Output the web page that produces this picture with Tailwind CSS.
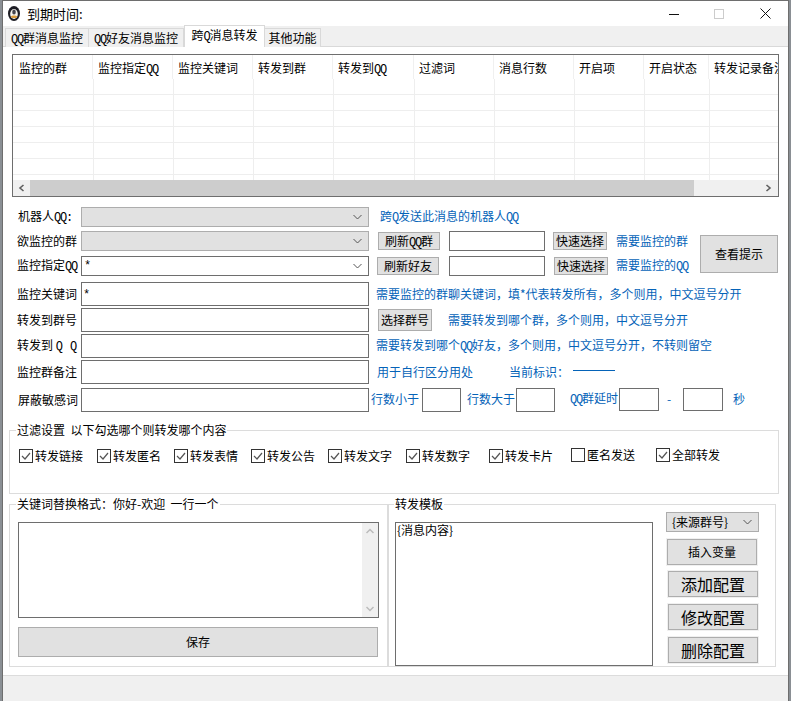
<!DOCTYPE html>
<html lang="zh-CN">
<head>
<meta charset="UTF-8">
<title>到期时间</title>
<script src="https://cdn.jsdelivr.net/npm/@tailwindcss/browser@4"></script>
</head>
<body class="w-[791px] h-[701px] overflow-hidden bg-[#8a8f94] font-['Noto_Sans_CJK_SC','Liberation_Sans',sans-serif] text-[12px] leading-[16px] text-black">
<div class="ml-[2px] w-[787px] h-[701px] bg-white border-t border-x border-[#6e6e6e] flex flex-col">

  <!-- title bar -->
  <div class="h-[25px] flex items-center shrink-0">
    <svg class="ml-[5px] w-[12px] h-[15px]" viewBox="0 0 12 15">
      <ellipse cx="6" cy="7.5" rx="6" ry="7.5" fill="#1d1d24"/>
      <ellipse cx="6" cy="8" rx="3.8" ry="5" fill="#f6f4ee"/>
      <ellipse cx="6" cy="6" rx="1.8" ry="2.6" fill="#44444c"/>
      <path d="M2.8 10.5c1-1.2 5.4-1.2 6.4 0l-1 1.5h-4.4z" fill="#d99a3a"/>
    </svg>
    <span class="ml-[7px] text-[13px]">到期时间:</span>
    <svg class="ml-auto w-[10px] h-[10px]" viewBox="0 0 10 10"><path d="M0 5.5h10" stroke="#111"/></svg>
    <svg class="ml-[35px] w-[10px] h-[10px]" viewBox="0 0 10 10"><rect x=".5" y=".5" width="9" height="9" fill="none" stroke="#ccc"/></svg>
    <svg class="ml-[36px] mr-[17px] w-[11px] h-[11px]" viewBox="0 0 11 11"><path d="M.5.5l10 10M10.5.5l-10 10" stroke="#111"/></svg>
  </div>

  <!-- tabs -->
  <div class="h-[21px] shrink-0 bg-[#f0f0f0] border-b border-[#d9d9d9] flex items-end pl-[2px]">
    <div class="w-[84px] h-[19px] -mb-px bg-[#f0f0f0] border border-b-0 border-[#d9d9d9] text-center leading-[18px]"><span class="font-['Liberation_Mono'] tracking-[-1.2px]">QQ</span>群消息监控</div>
    <div class="w-[95px] h-[19px] -mb-px bg-[#f0f0f0] border border-l-0 border-b-0 border-[#d9d9d9] text-center leading-[18px]"><span class="font-['Liberation_Mono'] tracking-[-1.2px]">QQ</span>好友消息监控</div>
    <div class="w-[81px] h-[22px] -mb-px bg-white border border-b-0 border-[#d9d9d9] text-center leading-[18px]">跨<span class="font-['Liberation_Mono'] tracking-[-1.2px]">Q</span>消息转发</div>
    <div class="w-[56px] h-[19px] -mb-px bg-[#f0f0f0] border border-l-0 border-b-0 border-[#d9d9d9] text-center leading-[18px]">其他功能</div>
  </div>

  <!-- list -->
  <div class="ml-[9px] mt-[7px] w-[767px] h-[143px] shrink-0 border border-[#6e6e6e] flex flex-col">
    <div class="grid grid-cols-[80px_80px_80px_80px_81px_80px_80px_70px_65px_70px] h-[24px] shrink-0 overflow-hidden">
      <div class="border-r border-[#f0f0f0] pl-[6px] pt-[5px]">监控的群</div>
      <div class="border-r border-[#f0f0f0] pl-[5px] pt-[5px]">监控指定<span class="font-['Liberation_Mono'] tracking-[-1.2px]">QQ</span></div>
      <div class="border-r border-[#f0f0f0] pl-[5px] pt-[5px]">监控关键词</div>
      <div class="border-r border-[#f0f0f0] pl-[5px] pt-[5px]">转发到群</div>
      <div class="border-r border-[#f0f0f0] pl-[5px] pt-[5px]">转发到<span class="font-['Liberation_Mono'] tracking-[-1.2px]">QQ</span></div>
      <div class="border-r border-[#f0f0f0] pl-[5px] pt-[5px]">过滤词</div>
      <div class="border-r border-[#f0f0f0] pl-[5px] pt-[5px]">消息行数</div>
      <div class="border-r border-[#f0f0f0] pl-[5px] pt-[5px]">开启项</div>
      <div class="border-r border-[#f0f0f0] pl-[5px] pt-[5px]">开启状态</div>
      <div class="pl-[5px] pt-[5px] whitespace-nowrap overflow-hidden">转发记录备注</div>
    </div>
    <div class="h-[101px] shrink-0 pl-px grid grid-cols-[80px_80px_80px_80px_81px_80px_80px_70px_65px_69px] bg-[repeating-linear-gradient(#fff_0,#fff_15px,#eeeeee_15px,#eeeeee_16px)]">
      <div class="border-r border-[#eeeeee]"></div>
      <div class="border-r border-[#eeeeee]"></div>
      <div class="border-r border-[#eeeeee]"></div>
      <div class="border-r border-[#eeeeee]"></div>
      <div class="border-r border-[#eeeeee]"></div>
      <div class="border-r border-[#eeeeee]"></div>
      <div class="border-r border-[#eeeeee]"></div>
      <div class="border-r border-[#eeeeee]"></div>
      <div class="border-r border-[#eeeeee]"></div>
      <div></div>
    </div>
    <div class="h-[16px] shrink-0 bg-[#f0f0f0] flex items-center">
      <svg class="ml-[5px] w-[7px] h-[8px]" viewBox="0 0 7 8"><path d="M5.5 1L2 4l3.5 3" fill="none" stroke="#606060" stroke-width="1.6"/></svg>
      <div class="ml-[5px] w-[664px] h-[16px] bg-[#cdcdcd]"></div>
      <svg class="ml-[71px] w-[7px] h-[8px]" viewBox="0 0 7 8"><path d="M1.5 1L5 4 1.5 7" fill="none" stroke="#606060" stroke-width="1.6"/></svg>
    </div>
  </div>

  <!-- form rows with the hint button -->
  <div class="flex mt-[10px] shrink-0">
    <div class="w-[697px]">
      <div class="flex items-center h-[20px]">
        <span class="ml-[15px] w-[63px] whitespace-nowrap">机器人<span class="font-['Liberation_Mono'] tracking-[-1.2px]">QQ:</span></span>
        <div class="w-[288px] h-[20px] bg-[#e1e1e1] border border-[#adadad] flex items-center justify-end pr-[6px]">
          <svg class="w-[9px] h-[6px]" viewBox="0 0 9 6"><path d="M.5 1l4 4 4-4" fill="none" stroke="#555"/></svg>
        </div>
        <span class="ml-[11px] text-[#0563b8] whitespace-nowrap">跨<span class="font-['Liberation_Mono'] tracking-[-1.2px]">Q</span>发送此消息的机器人<span class="font-['Liberation_Mono'] tracking-[-1.2px]">QQ</span></span>
      </div>
      <div class="flex items-center h-[20px] mt-[4px]">
        <span class="ml-[14px] w-[64px] whitespace-nowrap">欲监控的群</span>
        <div class="w-[288px] h-[20px] bg-[#e1e1e1] border border-[#adadad] flex items-center justify-end pr-[6px]">
          <svg class="w-[9px] h-[6px]" viewBox="0 0 9 6"><path d="M.5 1l4 4 4-4" fill="none" stroke="#555"/></svg>
        </div>
        <button class="ml-[9px] w-[62px] h-[18px] bg-[#e1e1e1] border border-[#adadad] leading-[16px]">刷新<span class="font-['Liberation_Mono'] tracking-[-1.2px]">QQ</span>群</button>
        <div class="ml-[9px] w-[96px] h-[20px] border border-[#6e6e6e]"></div>
        <button class="ml-[8px] w-[54px] h-[18px] bg-[#e1e1e1] border border-[#adadad] leading-[16px]">快速选择</button>
        <span class="ml-[9px] text-[#0563b8] whitespace-nowrap">需要监控的群</span>
      </div>
      <div class="flex items-center h-[20px] mt-[5px]">
        <span class="ml-[14px] w-[64px] whitespace-nowrap">监控指定<span class="font-['Liberation_Mono'] tracking-[-1.2px]">QQ</span></span>
        <div class="w-[288px] h-[20px] bg-white border border-[#6e6e6e] flex items-center justify-between pl-[2px] pr-[6px]">
          <span class="font-['Liberation_Mono'] text-[12px]">*</span>
          <svg class="w-[9px] h-[6px]" viewBox="0 0 9 6"><path d="M.5 1l4 4 4-4" fill="none" stroke="#555"/></svg>
        </div>
        <button class="ml-[8px] w-[62px] h-[18px] bg-[#e1e1e1] border border-[#adadad] leading-[16px]">刷新好友</button>
        <div class="ml-[10px] w-[96px] h-[20px] border border-[#6e6e6e]"></div>
        <button class="ml-[9px] w-[54px] h-[18px] bg-[#e1e1e1] border border-[#adadad] leading-[16px]">快速选择</button>
        <span class="ml-[8px] text-[#0563b8] whitespace-nowrap">需要监控的<span class="font-['Liberation_Mono'] tracking-[-1.2px]">QQ</span></span>
      </div>
    </div>
    <button class="mt-[28px] w-[78px] h-[38px] bg-[#e1e1e1] border border-[#adadad]">查看提示</button>
  </div>

  <div class="flex items-center h-[24px] mt-[6px] shrink-0">
    <span class="ml-[14px] w-[64px] whitespace-nowrap">监控关键词</span>
    <div class="w-[288px] h-[24px] border border-[#6e6e6e] pl-[1px] font-['Liberation_Mono'] leading-[24px]">*</div>
    <span class="ml-[7px] text-[#0563b8] whitespace-nowrap">需要监控的群聊关键词，填*代表转发所有，多个则用，中文逗号分开</span>
  </div>
  <div class="flex items-center h-[24px] mt-[2px] shrink-0">
    <span class="ml-[14px] w-[64px] whitespace-nowrap">转发到群号</span>
    <div class="w-[288px] h-[24px] border border-[#6e6e6e]"></div>
    <button class="ml-[9px] w-[54px] h-[22px] bg-[#e1e1e1] border border-[#adadad]">选择群号</button>
    <span class="ml-[16px] text-[#0563b8] whitespace-nowrap">需要转发到哪个群，多个则用，中文逗号分开</span>
  </div>
  <div class="flex items-center h-[24px] mt-[2px] shrink-0">
    <span class="ml-[14px] w-[64px] whitespace-nowrap">转发到 <span class="font-['Liberation_Mono'] whitespace-pre">Q Q</span></span>
    <div class="w-[288px] h-[24px] border border-[#6e6e6e]"></div>
    <span class="ml-[7px] text-[#0563b8] whitespace-nowrap">需要转发到哪个<span class="font-['Liberation_Mono'] tracking-[-1.2px]">QQ</span>好友，多个则用，中文逗号分开，不转则留空</span>
  </div>
  <div class="flex items-center h-[24px] mt-[2px] shrink-0">
    <span class="ml-[14px] w-[64px] whitespace-nowrap">监控群备注</span>
    <div class="w-[288px] h-[24px] border border-[#6e6e6e]"></div>
    <span class="ml-[8px] text-[#0563b8] whitespace-nowrap">用于自行区分用处</span>
    <span class="ml-[36px] text-[#0563b8] whitespace-nowrap">当前标识：</span>
    <div class="ml-[4px] w-[42px] h-px bg-[#0563b8] -mt-[4px]"></div>
  </div>
  <div class="flex items-center h-[24px] mt-[4px] shrink-0">
    <span class="ml-[15px] w-[63px] whitespace-nowrap -mt-[1px]">屏蔽敏感词</span>
    <div class="w-[288px] h-[24px] border border-[#6e6e6e]"></div>
    <span class="ml-[2px] -mt-[2px] text-[#0563b8] whitespace-nowrap">行数小于</span>
    <div class="ml-[3px] w-[39px] h-[24px] border border-[#6e6e6e]"></div>
    <span class="ml-[6px] -mt-[2px] text-[#0563b8] whitespace-nowrap">行数大于</span>
    <div class="w-[39px] h-[24px] ml-[1px] border border-[#6e6e6e]"></div>
    <span class="ml-[15px] -mt-[2px] text-[#0563b8] whitespace-nowrap"><span class="font-['Liberation_Mono'] tracking-[-1.2px]">QQ</span>群延时</span>
    <div class="ml-px w-[40px] h-[23px] -mt-[2px] border border-[#6e6e6e]"></div>
    <span class="ml-[8px] w-[16px] -mt-[2px] text-[#0563b8]">-</span>
    <div class="w-[40px] h-[23px] -mt-[2px] border border-[#6e6e6e]"></div>
    <span class="ml-[10px] -mt-[2px] text-[#0563b8]">秒</span>
  </div>

  <!-- filter group -->
  <div class="relative ml-[6px] mt-[18px] w-[770px] h-[64px] shrink-0 border border-[#dcdcdc] flex items-start pt-[17px] pl-[9px]">
    <span class="absolute left-[6px] -top-[9px] bg-white px-[1px]">过滤设置&nbsp;&nbsp;以下勾选哪个则转发哪个内容</span>
    <label class="flex items-center w-[78px]"><svg class="w-[14px] h-[14px] mr-[2px]" viewBox="0 0 14 14"><rect x=".5" y=".5" width="13" height="13" fill="#fff" stroke="#333"/><path d="M3 7l3 3 5-6" fill="none" stroke="#555" stroke-width="1.2"/></svg>转发链接</label>
    <label class="flex items-center w-[77px]"><svg class="w-[14px] h-[14px] mr-[2px]" viewBox="0 0 14 14"><rect x=".5" y=".5" width="13" height="13" fill="#fff" stroke="#333"/><path d="M3 7l3 3 5-6" fill="none" stroke="#555" stroke-width="1.2"/></svg>转发匿名</label>
    <label class="flex items-center w-[77px]"><svg class="w-[14px] h-[14px] mr-[2px]" viewBox="0 0 14 14"><rect x=".5" y=".5" width="13" height="13" fill="#fff" stroke="#333"/><path d="M3 7l3 3 5-6" fill="none" stroke="#555" stroke-width="1.2"/></svg>转发表情</label>
    <label class="flex items-center w-[77px]"><svg class="w-[14px] h-[14px] mr-[2px]" viewBox="0 0 14 14"><rect x=".5" y=".5" width="13" height="13" fill="#fff" stroke="#333"/><path d="M3 7l3 3 5-6" fill="none" stroke="#555" stroke-width="1.2"/></svg>转发公告</label>
    <label class="flex items-center w-[78px]"><svg class="w-[14px] h-[14px] mr-[2px]" viewBox="0 0 14 14"><rect x=".5" y=".5" width="13" height="13" fill="#fff" stroke="#333"/><path d="M3 7l3 3 5-6" fill="none" stroke="#555" stroke-width="1.2"/></svg>转发文字</label>
    <label class="flex items-center w-[83px]"><svg class="w-[14px] h-[14px] mr-[2px]" viewBox="0 0 14 14"><rect x=".5" y=".5" width="13" height="13" fill="#fff" stroke="#333"/><path d="M3 7l3 3 5-6" fill="none" stroke="#555" stroke-width="1.2"/></svg>转发数字</label>
    <label class="flex items-center w-[82px]"><svg class="w-[14px] h-[14px] mr-[2px]" viewBox="0 0 14 14"><rect x=".5" y=".5" width="13" height="13" fill="#fff" stroke="#333"/><path d="M3 7l3 3 5-6" fill="none" stroke="#555" stroke-width="1.2"/></svg>转发卡片</label>
    <label class="flex items-center w-[85px] -mt-[1px]"><svg class="w-[14px] h-[14px] mr-[2px]" viewBox="0 0 14 14"><rect x=".5" y=".5" width="13" height="13" fill="#fff" stroke="#333"/></svg>匿名发送</label>
    <label class="flex items-center -mt-[1px]"><svg class="w-[14px] h-[14px] mr-[2px]" viewBox="0 0 14 14"><rect x=".5" y=".5" width="13" height="13" fill="#fff" stroke="#333"/><path d="M3 7l3 3 5-6" fill="none" stroke="#555" stroke-width="1.2"/></svg>全部转发</label>
  </div>

  <!-- bottom groups -->
  <div class="flex ml-[6px] mt-[10px] h-[163px] shrink-0">
    <div class="relative w-[378px] h-[163px] border border-r-0 border-[#dcdcdc] pl-[8px] pt-[17px]">
      <span class="absolute left-[6px] -top-[9px] bg-white px-[1px]">关键词替换格式：你好-欢迎&nbsp;&nbsp;一行一个</span>
      <div class="w-[361px] h-[96px] border border-[#6e6e6e] flex justify-end">
        <div class="w-[16px] h-[94px] bg-[#f0f0f0] flex flex-col items-center justify-between py-[5px]">
          <svg class="w-[8px] h-[6px]" viewBox="0 0 8 6"><path d="M.5 5L4 1.5 7.5 5" fill="none" stroke="#bbb" stroke-width="1.5"/></svg>
          <svg class="w-[8px] h-[6px]" viewBox="0 0 8 6"><path d="M.5 1L4 4.5 7.5 1" fill="none" stroke="#bbb" stroke-width="1.5"/></svg>
        </div>
      </div>
      <button class="block mt-[9px] w-[360px] h-[30px] bg-[#e1e1e1] border border-[#adadad]">保存</button>
    </div>
    <div class="relative w-[389px] h-[163px] border-y border-r border-l-2 border-[#dcdcdc] flex">
      <span class="absolute left-[5px] -top-[9px] bg-white px-[1px]">转发模板</span>
      <div class="ml-[6px] mt-[17px] w-[258px] h-[144px] border border-[#6e6e6e] pl-[1px] leading-[14px]">{消息内容}</div>
      <div class="ml-[13px] mt-[7px] flex flex-col items-start">
        <div class="w-[93px] h-[20px] bg-[#e1e1e1] border border-[#adadad] flex items-center justify-between pl-[5px] pr-[6px]">{来源群号}<svg class="w-[9px] h-[6px]" viewBox="0 0 9 6"><path d="M.5 1l4 4 4-4" fill="none" stroke="#555"/></svg></div>
        <button class="mt-[7px] ml-px w-[90px] h-[26px] bg-[#e1e1e1] border border-[#adadad] ring-1 ring-[#f0f0f0]">插入变量</button>
        <button class="mt-[6px] ml-[2px] w-[90px] h-[26px] bg-[#e1e1e1] border border-[#adadad] ring-1 ring-[#f0f0f0] text-[16px]">添加配置</button>
        <button class="mt-[7px] ml-[2px] w-[90px] h-[26px] bg-[#e1e1e1] border border-[#adadad] ring-1 ring-[#f0f0f0] text-[16px]">修改配置</button>
        <button class="mt-[7px] ml-[2px] w-[90px] h-[26px] bg-[#e1e1e1] border border-[#adadad] ring-1 ring-[#f0f0f0] text-[16px]">删除配置</button>
      </div>
    </div>
  </div>

  <!-- footer strip -->
  <div class="flex-1 mt-[8px] bg-[#f0f0f0] border-t border-[#dcdcdc]"></div>
</div>
</body>
</html>
